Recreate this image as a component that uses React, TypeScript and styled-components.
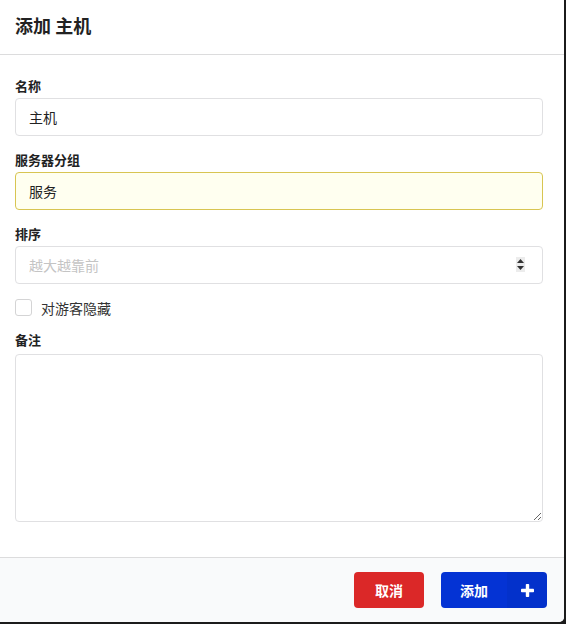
import React from "react";
import styled, { createGlobalStyle } from "styled-components";

const Global = createGlobalStyle`
  html, body { margin: 0; padding: 0; background: #1b1b1b; }
  body { font-family: "Lato", "Noto Sans CJK SC", sans-serif; }
  * { box-sizing: border-box; }
`;

const Modal = styled.div`
  width: 564px;
  height: 622px;
  background: #ffffff;
  border-radius: 0 0 5px 0;
  overflow: hidden;
  display: flex;
  flex-direction: column;
`;

const Header = styled.div`
  height: 55px;
  padding: 0 15px;
  display: flex;
  align-items: center;
  border-bottom: 1px solid #dcdcdd;
  font-size: 18px;
  font-weight: 700;
  color: #222;
  padding-bottom: 5px;
`;

const Content = styled.div`
  flex: 1;
  padding: 22px 21px 0 15px;
  display: flex;
  flex-direction: column;
  gap: 15px;
`;

const Field = styled.div<{ $gap?: number }>`
  display: flex;
  flex-direction: column;
  gap: ${(p) => p.$gap ?? 3}px;
`;

const Label = styled.label`
  font-size: 13px;
  font-weight: 700;
  line-height: 18px;
  color: #222;
`;

const Input = styled.input<{ $warn?: boolean }>`
  height: 38px;
  width: 100%;
  padding: 0 13px;
  font-family: inherit;
  font-size: 14px;
  color: #222;
  border: 1px solid ${(p) => (p.$warn ? "#d8c552" : "#e0e0e2")};
  background: ${(p) => (p.$warn ? "#fffff0" : "#fff")};
  border-radius: 4px;
  outline: none;
  &::placeholder { color: #c4c4c4; }
`;

const InputWrap = styled.div`
  position: relative;
`;

const Spinner = styled.div`
  position: absolute;
  right: 18px;
  top: 11px;
  width: 9px;
  height: 15px;
  background: #ececec;
  display: flex;
  align-items: center;
  justify-content: center;
`;

const CheckRow = styled.div`
  display: flex;
  align-items: center;
  gap: 9px;
  height: 17px;
`;

const Box = styled.span`
  width: 17px;
  height: 17px;
  border: 1px solid #d4d4d5;
  border-radius: 3px;
  background: #fff;
`;

const CheckText = styled.span`
  font-size: 14px;
  color: #333;
`;

const TextArea = styled.textarea`
  height: 168px;
  width: 100%;
  border: 1px solid #e0e0e2;
  border-radius: 4px;
  font-family: inherit;
  font-size: 14px;
  padding: 10px 13px;
  outline: none;
  resize: vertical;
`;

const Footer = styled.div`
  height: 65px;
  background: #f9fafb;
  border-top: 1px solid #dcdcdd;
  display: flex;
  justify-content: flex-end;
  align-items: flex-start;
  padding: 14px 17px 0 0;
  gap: 17px;
`;

const Button = styled.button<{ $color: string }>`
  height: 36px;
  border: none;
  border-radius: 4px;
  background: ${(p) => p.$color};
  color: #fff;
  font-family: inherit;
  font-size: 14px;
  font-weight: 700;
  display: flex;
  align-items: stretch;
  padding: 0;
  overflow: hidden;
`;

const ButtonText = styled.span<{ $w: number }>`
  width: ${(p) => p.$w}px;
  display: flex;
  align-items: center;
  justify-content: center;
`;

const IconPart = styled.span`
  width: 40px;
  background: rgba(0, 0, 0, 0.04);
  display: flex;
  align-items: center;
  justify-content: center;
`;

export default function App() {
  return (
    <>
      <Global />
      <Modal>
        <Header>添加 主机</Header>
        <Content>
          <Field>
            <Label>名称</Label>
            <Input defaultValue="主机" />
          </Field>
          <Field>
            <Label>服务器分组</Label>
            <Input $warn defaultValue="服务" />
          </Field>
          <Field>
            <Label>排序</Label>
            <InputWrap>
              <Input placeholder="越大越靠前" />
              <Spinner>
                <svg width="9" height="13" viewBox="0 0 9 13">
                  <path d="M4.5 1 L8 5 L1 5 Z" fill="#333" />
                  <path d="M1 8 L8 8 L4.5 12 Z" fill="#333" />
                </svg>
              </Spinner>
            </InputWrap>
          </Field>
          <CheckRow>
            <Box />
            <CheckText>对游客隐藏</CheckText>
          </CheckRow>
          <Field $gap={5}>
            <Label>备注</Label>
            <TextArea />
          </Field>
        </Content>
        <Footer>
          <Button $color="#db2828">
            <ButtonText $w={70}>取消</ButtonText>
          </Button>
          <Button $color="#0433d4">
            <ButtonText $w={66}>添加</ButtonText>
            <IconPart>
              <svg width="13" height="13" viewBox="0 0 13 13">
                <rect x="4.8" y="0" width="3.4" height="13" rx="0.8" fill="#fff" />
                <rect x="0" y="4.8" width="13" height="3.4" rx="0.8" fill="#fff" />
              </svg>
            </IconPart>
          </Button>
        </Footer>
      </Modal>
    </>
  );
}
